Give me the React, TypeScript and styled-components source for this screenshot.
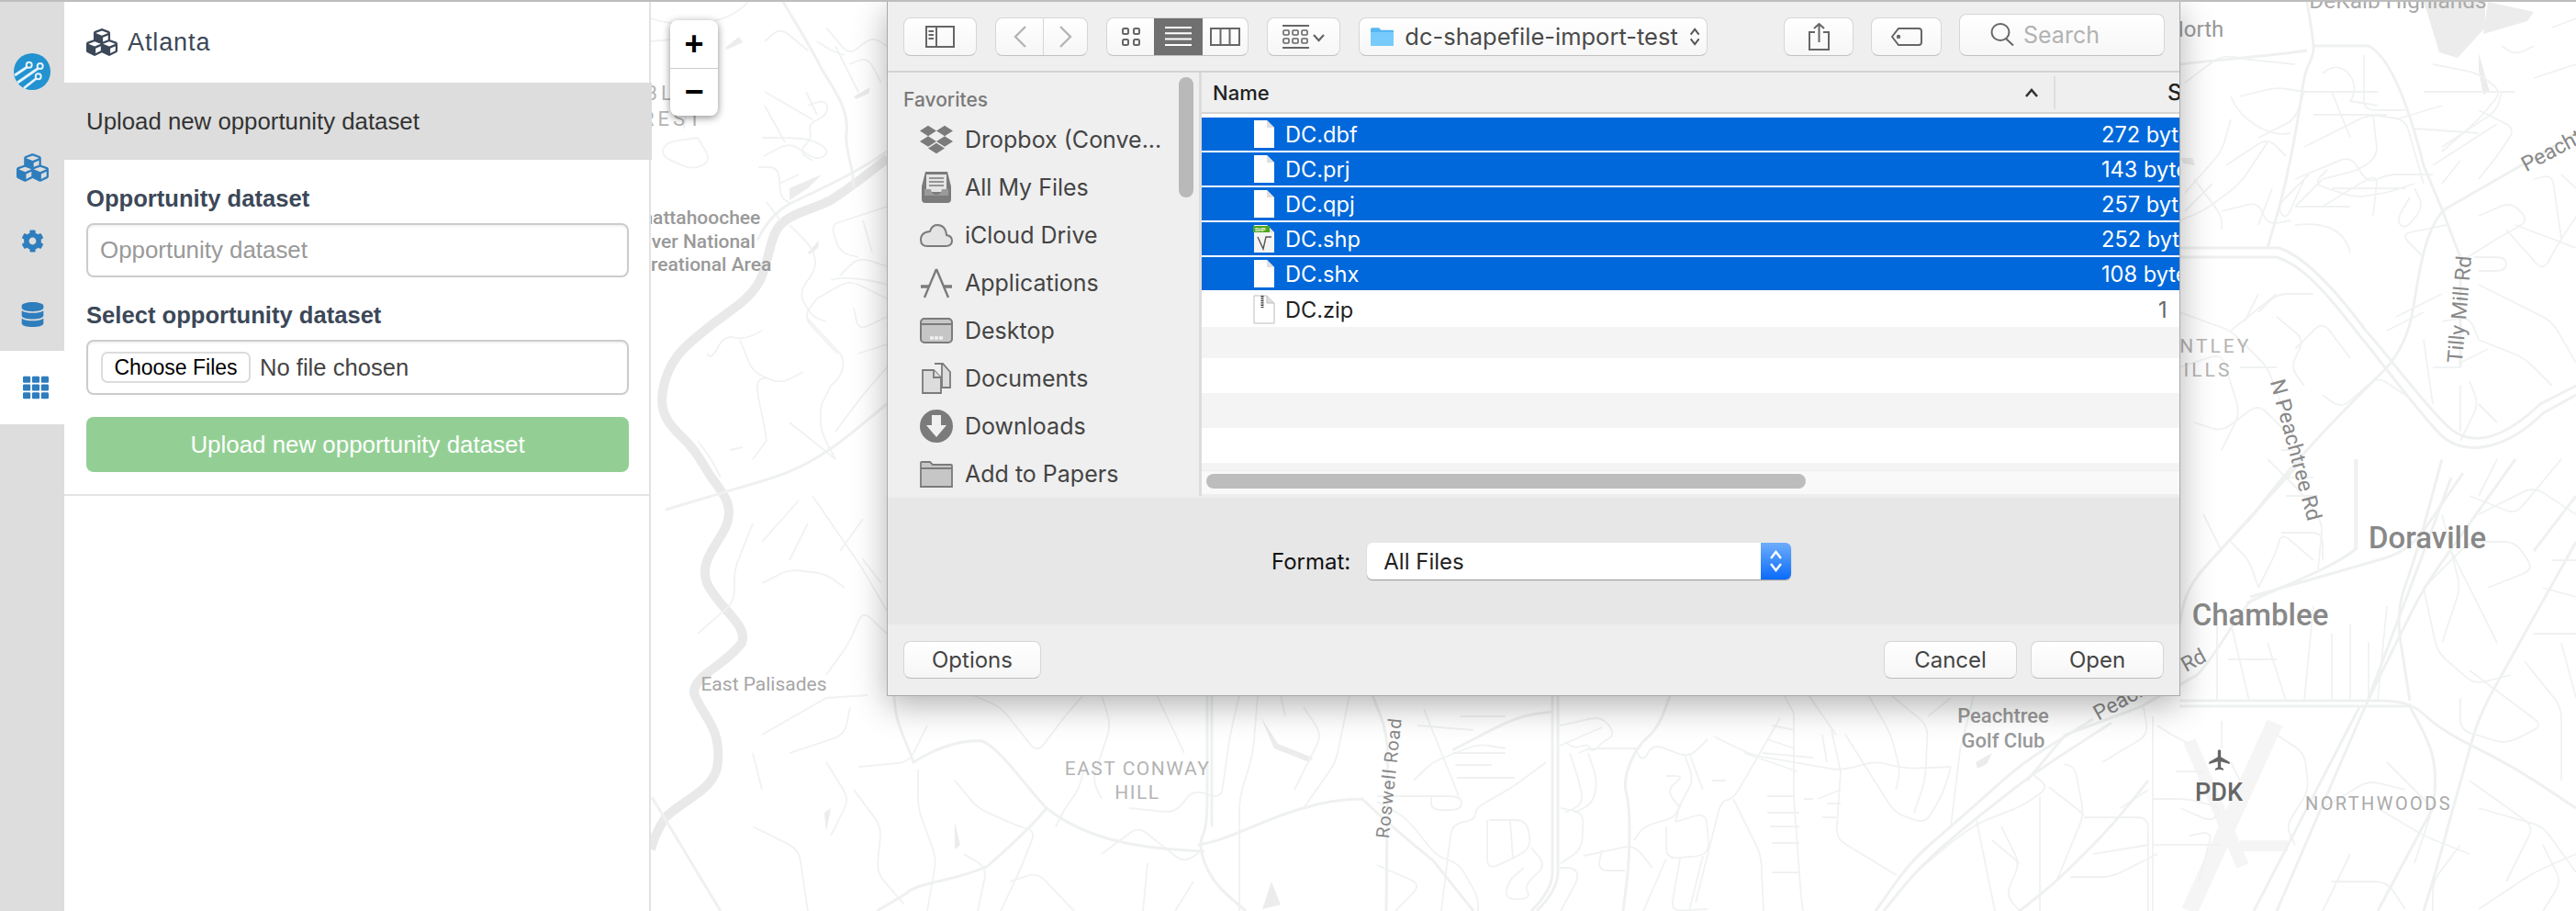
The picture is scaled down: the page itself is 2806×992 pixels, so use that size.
import React from 'react';
import styled, { createGlobalStyle } from 'styled-components';
import { FaCubes, FaCog, FaDatabase, FaTh, FaDropbox } from 'react-icons/fa';
import { MdLocalAirport } from 'react-icons/md';

const GlobalStyle = createGlobalStyle`
    html, body {
        margin: 0;
        padding: 0;
        background: #fff;
    }
    * {
        box-sizing: border-box;
    }
`;

const WEB_FONT = '"Liberation Sans", Arial, sans-serif';
const MAC_FONT = 'Inter, "Liberation Sans", sans-serif';
const MAP_FONT = 'Roboto, "Liberation Sans", sans-serif';

const Page = styled.div`
    position: relative;
    display: flex;
    width: 2806px;
    height: 992px;
    overflow: hidden;
    border-top: 2px solid #bdbdbd;
    font-family: ${WEB_FONT};
`;

/* left icon rail */

const Rail = styled.nav`
    flex: none;
    display: flex;
    flex-direction: column;
    width: 70px;
    background: #ddd;
`;

const RailLogo = styled.div`
    display: flex;
    justify-content: center;
    height: 140px;
    padding-top: 56px;
`;

const RailItem = styled.div<{ $active?: boolean }>`
    display: flex;
    align-items: center;
    justify-content: center;
    height: 80px;
    padding-left: ${({ $active }) => ($active ? '8px' : '0')};
    background: ${({ $active }) => ($active ? '#fff' : 'transparent')};
    color: #2e7dbd;
`;

/* form panel */

const Panel = styled.aside`
    position: relative;
    z-index: 2;
    flex: none;
    width: 639px;
    background: #fff;
    border-right: 2px solid #e2e2e2;
`;

const PanelHeader = styled.header`
    display: flex;
    align-items: center;
    gap: 11px;
    height: 88px;
    padding-left: 24px;
    color: #3c4858;
    font-size: 27px;
    letter-spacing: 0.9px;
`;

const SectionBand = styled.div`
    display: flex;
    align-items: center;
    width: 640px;
    height: 84px;
    padding-left: 24px;
    background: #ddd;
    color: #333;
    font-size: 25.8px;
`;

const Form = styled.form`
    display: flex;
    flex-direction: column;
    padding: 27px 22px 24px 24px;
    border-bottom: 2px solid #e4e4e4;
`;

const FieldLabel = styled.label`
    height: 30px;
    margin-bottom: 12px;
    color: #3c4858;
    font-size: 25.6px;
    font-weight: 700;
    line-height: 30px;
`;

const TextInput = styled.input`
    width: 100%;
    height: 59px;
    margin-bottom: 26px;
    padding: 0 13px;
    border: 2px solid #ccc;
    border-radius: 8px;
    box-shadow: inset 0 2px 2px rgba(0, 0, 0, 0.05);
    color: #333;
    font-family: ${WEB_FONT};
    font-size: 25.9px;

    &::placeholder {
        color: #999;
    }
`;

const FileBox = styled.div`
    display: flex;
    align-items: center;
    gap: 10px;
    height: 60px;
    margin-bottom: 24px;
    padding-left: 14px;
    border: 2px solid #ccc;
    border-radius: 8px;
    box-shadow: inset 0 2px 2px rgba(0, 0, 0, 0.05);
    color: #444;
    font-size: 25.6px;
`;

const FileButton = styled.button`
    width: 163px;
    height: 34px;
    padding: 0;
    border: 2px solid #dcdcdc;
    border-radius: 7px;
    background: #fff;
    color: #000;
    font-family: ${WEB_FONT};
    font-size: 23px;
`;

const SubmitButton = styled.button`
    height: 60px;
    border: none;
    border-radius: 8px;
    background: #93cf94;
    color: #fff;
    font-family: ${WEB_FONT};
    font-size: 25.9px;
`;

/* map */

const MapArea = styled.main`
    position: relative;
    flex: 1;
    overflow: hidden;
    background: #fff;
`;

const MapDrawing = styled.svg`
    display: block;
    width: 100%;
    height: 100%;
`;

const MapLabel = styled.span<{
    $x: number;
    $y: number;
    $size?: number;
    $rot?: number;
    $color?: string;
    $spacing?: number;
    $weight?: number;
}>`
    position: absolute;
    left: ${({ $x }) => $x - 709}px;
    top: ${({ $y }) => $y - 2}px;
    transform: translate(-50%, -50%) rotate(${({ $rot }) => $rot ?? 0}deg);
    color: ${({ $color }) => $color ?? '#a6a6a6'};
    font-family: ${MAP_FONT};
    font-size: ${({ $size }) => $size ?? 21}px;
    font-weight: ${({ $weight }) => $weight ?? 400};
    letter-spacing: ${({ $spacing }) => $spacing ?? 0}px;
    line-height: 1.22;
    text-align: center;
    white-space: pre;
`;

const PlaneMark = styled.div`
    position: absolute;
    left: ${2404 - 709}px;
    top: ${814 - 2}px;
    color: #666;
    line-height: 0;
`;

const ZoomControl = styled.div`
    position: absolute;
    left: 21px;
    top: 20px;
    display: flex;
    flex-direction: column;
    width: 52px;
    height: 104px;
    border-radius: 8px;
    background: #fff;
    box-shadow: 0 2px 8px rgba(0, 0, 0, 0.45);
`;

const ZoomButton = styled.div`
    display: flex;
    flex: 1;
    align-items: center;
    justify-content: center;
    color: #000;
    font-family: ${WEB_FONT};
    font-size: 36px;
    font-weight: 700;
    line-height: 1;

    & + & {
        border-top: 1px solid #ccc;
    }
`;

/* open file dialog */

const Dialog = styled.section`
    position: absolute;
    z-index: 5;
    left: 966px;
    top: 0;
    display: flex;
    flex-direction: column;
    width: 1409px;
    height: 756px;
    overflow: hidden;
    border: 1px solid #a9a9a9;
    border-top: none;
    background: #eee;
    box-shadow: 0 10px 34px rgba(0, 0, 0, 0.3);
    font-family: ${MAC_FONT};
`;

const DialogShadowTop = styled.div`
    height: 6px;
    margin-bottom: -6px;
    background: linear-gradient(rgba(0, 0, 0, 0.05), rgba(0, 0, 0, 0));
`;

const Toolbar = styled.div`
    flex: none;
    display: flex;
    align-items: center;
    gap: 20px;
    height: 77px;
    padding: 0 16px 0 17px;
    border-bottom: 2px solid #d2d2d2;
    background: #efefef;
`;

const ToolGroup = styled.div`
    display: flex;
    gap: 19px;
    margin-left: auto;
`;

const ToolButton = styled.div<{ $w: number; $tall?: boolean }>`
    display: flex;
    flex: none;
    align-items: center;
    justify-content: center;
    width: ${({ $w }) => $w}px;
    height: ${({ $tall }) => ($tall ? 46 : 42)}px;
    margin-top: ${({ $tall }) => ($tall ? -4 : 0)}px;
    border: 1px solid #d6d6d6;
    border-bottom-color: #c0c0c0;
    border-radius: 8px;
    background: linear-gradient(#fff, #f6f6f6);
    color: #666;
`;

const Segmented = styled.div`
    display: flex;
    flex: none;
    height: 42px;
    overflow: hidden;
    border: 1px solid #d6d6d6;
    border-bottom-color: #c0c0c0;
    border-radius: 8px;
    background: linear-gradient(#fff, #f6f6f6);
`;

const Segment = styled.div<{ $w: number; $active?: boolean; $divider?: boolean }>`
    display: flex;
    align-items: center;
    justify-content: center;
    width: ${({ $w }) => $w}px;
    border-left: ${({ $divider }) => ($divider ? '1px solid #d6d6d6' : 'none')};
    background: ${({ $active }) => ($active ? '#707070' : 'transparent')};
    color: ${({ $active }) => ($active ? '#fff' : '#666')};
`;

const PathButton = styled(ToolButton)`
    justify-content: flex-start;
    gap: 12px;
    padding: 0 7px 0 12px;
    color: #4a4a4a;
    font-size: 25.5px;
    white-space: nowrap;
`;

const PathName = styled.span`
    flex: 1;
`;

const SearchButton = styled(ToolButton)`
    justify-content: flex-start;
    gap: 10px;
    padding-left: 33px;
    color: #b2b2b2;
    font-size: 25px;
`;

const Browser = styled.div`
    flex: none;
    display: flex;
    height: 461px;
`;

const Sidebar = styled.div`
    position: relative;
    flex: none;
    width: 342px;
    padding: 15px 0 0 17px;
    border-right: 3px solid #dcdcdc;
    background: #efefef;
`;

const SidebarHeading = styled.div`
    height: 30px;
    margin-bottom: 2px;
    color: #7a7a7a;
    font-size: 21px;
    font-weight: 500;
    line-height: 30px;
`;

const SidebarRow = styled.div`
    display: flex;
    align-items: center;
    gap: 13px;
    height: 52px;
    padding-left: 18px;
    color: #444;
    font-size: 25px;
    white-space: nowrap;
`;

const SidebarIcon = styled.div`
    display: flex;
    flex: none;
    align-items: center;
    justify-content: center;
    width: 36px;
    height: 36px;
    color: #7b7b7b;
`;

const SidebarScroll = styled.div`
    position: absolute;
    right: 6px;
    top: 5px;
    width: 16px;
    height: 131px;
    border-radius: 8px;
    background: #b9b9b9;
`;

const FilePane = styled.div`
    display: flex;
    flex: 1;
    flex-direction: column;
    min-width: 0;
    overflow: hidden;
    background: #fff;
`;

const ColumnHeader = styled.div`
    flex: none;
    display: flex;
    align-items: center;
    height: 45px;
    padding-left: 12px;
    border-bottom: 2px solid #d4d4d4;
    background: #efefef;
    color: #222;
    font-size: 22px;
    font-weight: 500;
`;

const HeaderName = styled.span`
    flex: 1;
`;

const SortCaret = styled.svg`
    flex: none;
    margin-right: 16px;
`;

const HeaderSize = styled.span`
    flex: none;
    width: 137px;
    height: 36px;
    padding-left: 122px;
    border-left: 2px solid #dedede;
    line-height: 36px;
    font-size: 24px;
`;

const RowList = styled.div`
    flex: 1;
    padding-top: 4px;
`;

const FileRow = styled.div<{ $selected?: boolean }>`
    display: flex;
    align-items: center;
    height: 36px;
    margin-bottom: ${({ $selected }) => ($selected ? '2px' : '0')};
    padding-left: 56px;
    overflow: hidden;
    background: ${({ $selected }) => ($selected ? '#0068da' : '#fff')};
    color: ${({ $selected }) => ($selected ? '#fff' : '#222')};
    font-size: 23.6px;
`;

const PlainRow = styled(FileRow)`
    height: 38px;
`;

const FileName = styled.span`
    flex: 1;
    margin-left: 11px;
`;

const FileSize = styled.span<{ $muted?: boolean; $inset?: number }>`
    flex: none;
    width: 85px;
    padding-left: ${({ $inset }) => $inset ?? 0}px;
    color: ${({ $muted }) => ($muted ? '#666' : 'inherit')};
    white-space: nowrap;
`;

const StripeRow = styled.div<{ $h: number; $grey?: boolean }>`
    height: ${({ $h }) => $h}px;
    background: ${({ $grey }) => ($grey ? '#f4f4f4' : '#fff')};
`;

const ScrollTrack = styled.div`
    flex: none;
    height: 28px;
    padding: 3px 0 0 5px;
    border-top: 1px solid #ededed;
    border-bottom: 2px solid #eee;
    background: #f9f9f9;
`;

const ScrollThumb = styled.div`
    width: 653px;
    height: 16px;
    border-radius: 8px;
    background: #bdbdbd;
`;

const OptionsBar = styled.div`
    flex: none;
    display: flex;
    align-items: center;
    height: 138px;
    margin-top: 2px;
    padding-left: 418px;
    background: #e7e7e7;
    color: #111;
    font-size: 24px;
`;

const FormatSelect = styled.div`
    display: flex;
    align-items: center;
    justify-content: space-between;
    width: 462px;
    height: 40px;
    margin-left: 18px;
    padding-left: 18px;
    overflow: hidden;
    border-radius: 6px;
    background: #fff;
    box-shadow: 0 1px 1px rgba(0, 0, 0, 0.35);
    color: #222;
`;

const SelectStepper = styled.div`
    display: flex;
    align-items: center;
    justify-content: center;
    width: 33px;
    height: 100%;
    background: linear-gradient(#6dadfb, #0a6bfb);
`;

const DialogFooter = styled.div`
    flex: 1;
    display: flex;
    align-items: center;
    gap: 15px;
    padding: 0 17px;
    background: #eee;
`;

const FooterButton = styled.div<{ $w: number; $push?: boolean }>`
    display: flex;
    align-items: center;
    justify-content: center;
    width: ${({ $w }) => $w}px;
    height: 41px;
    margin-left: ${({ $push }) => ($push ? 'auto' : '0')};
    border: 1px solid #d6d6d6;
    border-bottom-color: #bdbdbd;
    border-radius: 8px;
    background: linear-gradient(#fff, #f6f6f6);
    color: #444;
    font-size: 24px;
`;

/* drawings */

const Logo = () => (
    <svg width="40" height="40" viewBox="0 0 40 40">
        <circle cx="20" cy="20" r="20" fill="#2292d0" />
        <g fill="none" stroke="#e6f3fb" strokeWidth="2.8">
            <path d="M1 24 L14.5 15" />
            <circle cx="16.7" cy="12.7" r="3" strokeWidth="2" />
            <path d="M4 32 L26.5 16.5" />
            <circle cx="28.7" cy="14" r="3" strokeWidth="2" />
            <path d="M11 38 L24.5 27.5" />
            <circle cx="26.7" cy="25.3" r="3" strokeWidth="2" />
        </g>
    </svg>
);

const PaneIcon = () => (
    <svg width="32" height="24" viewBox="0 0 32 24" fill="none" stroke="currentColor" strokeWidth="2">
        <rect x="1" y="1" width="30" height="22" />
        <path d="M12 1 V23" />
        <path d="M3.5 6 H9 M3.5 10 H9 M3.5 14 H9" />
    </svg>
);

const Chevron = ({ left }: { left?: boolean }) => (
    <svg width="14" height="24" viewBox="0 0 14 24" fill="none" stroke="#b5b5b5" strokeWidth="2.4">
        <path d={left ? 'M13 1 L2 12 L13 23' : 'M1 1 L12 12 L1 23'} />
    </svg>
);

const IconGridView = () => (
    <svg width="20" height="20" viewBox="0 0 20 20" fill="none" stroke="currentColor" strokeWidth="2">
        <rect x="1" y="1" width="6" height="6" rx="1.5" />
        <rect x="13" y="1" width="6" height="6" rx="1.5" />
        <rect x="1" y="13" width="6" height="6" rx="1.5" />
        <rect x="13" y="13" width="6" height="6" rx="1.5" />
    </svg>
);

const IconListView = () => (
    <svg width="29" height="21" viewBox="0 0 29 21" stroke="currentColor" strokeWidth="2">
        <path d="M0 1 H29 M0 7.3 H29 M0 13.6 H29 M0 20 H29" />
    </svg>
);

const IconColumnView = () => (
    <svg width="33" height="20" viewBox="0 0 33 20" fill="none" stroke="currentColor" strokeWidth="2">
        <rect x="1" y="1" width="31" height="18" />
        <path d="M11.5 1 V19 M21.5 1 V19" />
    </svg>
);

const IconArrange = () => (
    <svg width="46" height="26" viewBox="0 0 46 26" fill="none" stroke="currentColor" strokeWidth="1.6">
        <path d="M0 1 H29 M0 25 H29" strokeWidth="2" />
        <rect x="1" y="6" width="6" height="5" rx="1" />
        <rect x="11" y="6" width="6" height="5" rx="1" />
        <rect x="21" y="6" width="6" height="5" rx="1" />
        <rect x="1" y="15" width="6" height="5" rx="1" />
        <rect x="11" y="15" width="6" height="5" rx="1" />
        <rect x="21" y="15" width="6" height="5" rx="1" />
        <path d="M34 11 L39.5 17 L45 11" strokeWidth="2.2" />
    </svg>
);

const BlueFolder = () => (
    <svg width="31" height="24" viewBox="0 0 31 24">
        <path d="M0 2 Q0 0 2 0 H11 L14 3 H29 Q31 3 31 5 V24 H0 Z" fill="#56b7f3" />
        <path d="M0 6 H31 V22 Q31 24 29 24 H2 Q0 24 0 22 Z" fill="#77cbfb" />
    </svg>
);

const UpDown = ({ color = '#555', size = 15 }: { color?: string; size?: number }) => (
    <svg width={size} height={size * 1.6} viewBox="0 0 15 24" fill="none" stroke={color} strokeWidth="2.4">
        <path d="M2 9 L7.5 2 L13 9 M2 15 L7.5 22 L13 15" />
    </svg>
);

const IconShare = () => (
    <svg width="23" height="30" viewBox="0 0 23 30" fill="none" stroke="currentColor" strokeWidth="2">
        <path d="M7 10 H1 V29 H22 V10 H16" />
        <path d="M11.5 21 V1 M6 6 L11.5 1 L17 6" />
    </svg>
);

const IconTag = () => (
    <svg width="34" height="20" viewBox="0 0 34 20" fill="none" stroke="currentColor" strokeWidth="2">
        <path d="M8 1 H30 Q33 1 33 4 V16 Q33 19 30 19 H8 L1 10 Z" />
        <circle cx="8" cy="10" r="1.2" />
    </svg>
);

const IconSearch = () => (
    <svg width="26" height="25" viewBox="0 0 26 25" fill="none" stroke="#666" strokeWidth="2">
        <ellipse cx="11" cy="10" rx="9.5" ry="9" />
        <path d="M17 17 L25 24.5" />
    </svg>
);

const IconTray = () => (
    <svg width="32" height="34" viewBox="0 0 32 34">
        <path d="M4 0 H28 L32 16 V30 Q32 34 28 34 H4 Q0 34 0 30 V16 Z" fill="#7b7b7b" />
        <rect x="5" y="3" width="22" height="19" fill="#e4e4e4" />
        <path d="M8 7 H24 M8 11 H24 M8 15 H24" stroke="#7b7b7b" strokeWidth="1.6" />
        <path d="M3 19 H10 Q11 25 16 25 Q21 25 22 19 H29 V26 H3 Z" fill="#9a9a9a" />
    </svg>
);

const IconCloud = () => (
    <svg width="36" height="25" viewBox="0 0 36 25" fill="#e4e4e4" stroke="#7b7b7b" strokeWidth="2">
        <path d="M8 24 H28 Q35 24 35 18 Q35 13 29 12 Q28 1 19 1 Q13 1 11 8 Q1 9 1 17 Q1 24 8 24 Z" />
    </svg>
);

const IconApps = () => (
    <svg width="36" height="33" viewBox="0 0 36 33" fill="none" stroke="#7b7b7b" strokeWidth="2.4">
        <path d="M18 1 L31 32 M18 1 L5 32" />
        <path d="M1 20 H35" strokeWidth="3.4" strokeDasharray="9 16" />
    </svg>
);

const IconDesktop = () => (
    <svg width="36" height="28" viewBox="0 0 36 28">
        <rect x="1" y="1" width="34" height="26" rx="4" fill="#c6c6c6" stroke="#7b7b7b" strokeWidth="2" />
        <path d="M1 7 H35" stroke="#7b7b7b" strokeWidth="2" />
        <path d="M11 22 H25" stroke="#f0f0f0" strokeWidth="3.6" strokeDasharray="4 1" />
    </svg>
);

const IconDocuments = () => (
    <svg width="32" height="34" viewBox="0 0 32 34" fill="#dcdcdc" stroke="#7b7b7b" strokeWidth="1.8">
        <path d="M14 1 H23 L31 10 V27 H22 V1" />
        <path d="M1 8 H13 L21 16 V33 H1 Z" />
        <path d="M13 8 V16 H21" />
    </svg>
);

const IconDownloads = () => (
    <svg width="36" height="36" viewBox="0 0 36 36">
        <circle cx="18" cy="18" r="18" fill="#7b7b7b" />
        <path d="M13 6 H23 V17 H29 L18 30 L7 17 H13 Z" fill="#f0f0f0" />
    </svg>
);

const IconFolderGrey = () => (
    <svg width="36" height="29" viewBox="0 0 36 29" fill="#c6c6c6" stroke="#7b7b7b" strokeWidth="1.8">
        <path d="M1 28 V2 Q1 1 2 1 H11 L14 4 H34 Q35 4 35 5 V28 Z" />
        <path d="M1 8 H35" />
    </svg>
);

const DocIcon = ({ kind }: { kind?: 'shp' | 'zip' }) => (
    <svg width="24" height="32" viewBox="0 0 24 32">
        <path
            d="M1 1 H15 L23 9 V31 H1 Z"
            fill={kind === 'shp' ? '#f4f4f4' : '#fff'}
            stroke={kind === 'zip' ? '#bdbdbd' : 'none'}
        />
        <path d="M15 1 V9 H23" fill="#dfdfdf" stroke={kind === 'zip' ? '#bdbdbd' : 'none'} />
        {kind === 'shp' && (
            <>
                <rect x="0" y="2" width="18" height="7" fill="#4ea61e" />
                <text x="2" y="8" fontSize="5.5" fontWeight="700" fill="#fff" fontFamily="Liberation Sans">
                    SHP
                </text>
                <path d="M5 14 L11 27 L14 14 L20 14" fill="none" stroke="#555" strokeWidth="1.4" />
            </>
        )}
        {kind === 'zip' && <path d="M10 1 V14" stroke="#333" strokeWidth="3" strokeDasharray="1.4 1" />}
    </svg>
);

/* map geometry, in page coordinates */

// takes the sharp corners off a street polyline, curved paths pass through as they are
const roundCorners = (d: string, r = 12): string =>
    d
        .split(/(?=M)/)
        .map((sub) => {
            if (sub.includes('C')) return sub;
            const tokens = sub.match(/[MLHV]|-?[\d.]+/g) ?? [];
            const pts: number[][] = [];
            let cmd = 'M';
            let x = 0;
            let y = 0;
            for (let i = 0; i < tokens.length; i++) {
                const t = tokens[i];
                if (/[MLHV]/.test(t)) {
                    cmd = t;
                } else if (cmd === 'H') {
                    x = +t;
                    pts.push([x, y]);
                } else if (cmd === 'V') {
                    y = +t;
                    pts.push([x, y]);
                } else {
                    x = +t;
                    y = +tokens[++i];
                    pts.push([x, y]);
                }
            }
            let out = `M${pts[0][0]} ${pts[0][1]}`;
            for (let i = 1; i < pts.length; i++) {
                const p = pts[i];
                if (i === pts.length - 1) {
                    out += ` L${p[0]} ${p[1]}`;
                    break;
                }
                const a = pts[i - 1];
                const b = pts[i + 1];
                const la = Math.hypot(p[0] - a[0], p[1] - a[1]) || 1;
                const lb = Math.hypot(b[0] - p[0], b[1] - p[1]) || 1;
                const ra = Math.min(r, la / 2) / la;
                const rb = Math.min(r, lb / 2) / lb;
                out += ` L${(p[0] - (p[0] - a[0]) * ra).toFixed(1)} ${(p[1] - (p[1] - a[1]) * ra).toFixed(1)}`;
                out += ` Q${p[0]} ${p[1]} ${(p[0] + (b[0] - p[0]) * rb).toFixed(1)} ${(p[1] + (b[1] - p[1]) * rb).toFixed(1)}`;
            }
            return out;
        })
        .join(' ');

const RIVER =
    'M967 172 C945 190 925 205 905 218 C885 228 862 232 850 245 C838 258 838 285 828 305 C815 330 790 340 765 362 C745 378 728 392 722 425 C718 450 728 462 745 478 C760 492 765 505 775 520 C790 540 800 552 790 575 C778 598 762 612 770 635 C785 665 815 680 808 700 C790 725 755 735 756 755 C765 780 785 790 782 830 C780 860 745 870 725 890 C715 905 712 915 709 925';

const WATER = [
    'M2645 17 L2657 57 L2677 63 L2707 30 L2707 2 L2640 2 Z',
    'M2710 2 L2760 13 L2753 23 L2705 37 Z',
    'M2700 58 L2712 100 L2705 103 L2700 77 Z',
    'M790 52 L805 40 L809 46 L792 54 Z',
    'M930 105 L948 95 L946 102 L932 108 Z',
    'M880 275 L892 262 L891 270 L882 277 Z',
    'M860 205 L895 190 L880 205 L860 218 Z',
    'M2376 172 L2388 172 L2391 180 L2378 178 Z',
    'M1373 780 L1392 810 L1430 825 L1426 830 L1388 815 Z',
    'M2152 830 L2170 820 L2164 832 L2154 837 Z',
    'M1040 895 L1046 920 L1040 925 Z',
    'M905 880 L900 905 L898 885 Z',
    'M1385 960 L1395 985 L1375 990 Z',
];

const RUNWAYS = [
    { d: 'M2385 807 L2443 943', w: 14 },
    { d: 'M2478 787 L2385 992', w: 18 },
    { d: 'M2440 921 L2492 921', w: 12 },
];

const MAJOR = [
    'M853 2 C870 30 885 55 895 75 C910 100 925 120 922 145 C920 165 930 180 930 205',
    'M966 165 C930 190 895 205 860 222 C842 232 830 250 825 262',
    'M725 555 L860 515 L905 490 L966 440',
    'M710 868 C730 900 765 960 785 992',
    'M974 757 C975 790 985 800 995 830 C1010 820 1040 805 1070 807 C1090 815 1120 860 1140 880 C1190 920 1260 925 1312 927',
    'M1140 880 C1120 905 1090 930 1076 943 C1040 960 1000 960 987 973 L955 992',
    'M1315 757 V900 L1305 920 L1320 960 L1357 992',
    'M1320 757 V900',
    'M1305 920 C1340 915 1380 890 1420 880 C1445 872 1470 870 1484 870 C1515 900 1540 920 1561 937 L1605 992',
    'M1495 757 L1512 800 L1510 992',
    'M1691 757 V950 C1691 965 1680 980 1668 992',
    'M1697 757 V950 C1697 965 1686 980 1674 992',
    'M1819 758 L1806 793 L1783 813 L1768 850 L1775 877 V937 L1768 992',
    'M1582 817 L1653 780 L1691 775',
    'M2280 783 L2204 830 L2125 900 L2082 937 L2043 992',
    'M2300 787 L2214 843 L2135 905 L2090 945 L2052 992',
    'M2374 270 H2483 C2510 280 2540 310 2577 360 C2600 385 2640 440 2667 465 C2695 490 2730 475 2767 440 L2806 420',
    'M2374 280 H2480 C2510 290 2535 320 2570 365 C2595 395 2635 450 2660 475 C2690 500 2735 485 2770 450 L2806 430',
    'M2513 2 L2520 45 V60 L2510 80 L2505 120 L2490 200 L2470 270',
    'M2520 50 H2580 C2600 60 2620 100 2640 180 L2660 228 L2680 280 V400',
    'M2806 145 L2750 178 L2663 228 C2640 250 2635 300 2627 345 C2620 375 2607 395 2590 410 C2550 450 2500 500 2455 560 L2393 627',
    'M2374 70 C2420 65 2480 60 2513 55',
    'M2447 657 C2480 640 2540 620 2567 597 V500',
    'M2451 650 L2625 600 L2683 515',
    'M2509 500 L2393 627 L2380 650 L2374 680',
    'M2451 655 C2430 680 2410 720 2393 735 L2331 770 L2250 800 L2208 850',
    'M2374 763 H2625 L2656 793 L2741 837 L2806 880',
    'M2374 769 H2625',
    'M2625 763 L2610 667 L2633 600 L2660 500',
    'M2579 763 L2633 620 L2670 520',
    'M2740 500 L2640 640 L2579 763 L2480 992',
    'M2570 770 L2455 992',
    'M2625 769 C2640 800 2660 820 2650 880 L2590 992',
    'M2806 590 L2750 690 L2700 780 L2650 960 L2640 992',
    'M2806 540 L2760 600',
    'M2200 992 L2240 960 L2300 900 L2340 850',
];

const MINOR = [
    'M709 20 C740 30 790 30 815 2', 'M709 45 L745 42', 'M900 30 L925 60 L950 40 L966 50', 'M925 70 L945 62 L960 90',
    'M890 45 L905 55 L920 60', 'M910 50 L935 100',
    'M760 150 L775 175 L755 185 L720 170 L725 155 L760 150', 'M745 140 L750 100',
    'M833 100 L885 130 M878 100 L890 125', 'M880 115 L900 108 L902 125 L880 135 L885 150 L870 165 L885 175',
    'M830 150 H860 L885 152 L905 165 L890 175 L860 155 L832 170',
    'M826 182 H848 L850 215 L862 222', 'M849 200 L870 190', 'M835 220 L850 240',
    'M860 245 L885 270 L890 290 L870 320 L885 345 L900 350',
    'M905 305 C920 300 950 305 966 310', 'M940 240 L950 275 M966 290 L935 280 L915 300',
    'M966 225 L920 240 L905 245 L915 275 L935 280',
    'M878 345 L915 385 C922 395 918 410 905 420 L895 440 C890 470 900 480 910 500',
    'M890 325 L925 305 L966 325 M890 325 L875 345 L912 385',
    'M930 335 L935 360 L966 345', 'M935 385 L966 375', 'M910 470 L940 430 L966 400',
    'M830 360 L810 370 L790 365 L775 390 L770 385 M806 370 L820 405 L850 418 L875 405',
    'M835 412 C815 410 830 440 835 480 L820 500',
    'M795 490 L809 487', 'M760 480 L775 500 L785 520', 'M860 460 L910 500',
    'M745 100 L775 90', 'M833 115 L855 155', 'M833 45 L850 30 L880 55',
    'M820 570 L800 620 L800 655 L760 690 M830 590 L870 545', 'M885 540 L940 620 L966 665',
    'M880 570 L860 610 M830 635 L860 620 L900 625 L920 640', 'M939 608 L960 635 M915 600 L940 565',
    'M966 690 L940 665 L925 700 L900 735', 'M830 800 L900 760', 'M900 760 L945 757',
    'M935 835 L990 830 L1010 790 M1000 838 L1000 880 L1020 935 L1010 992',
    'M930 860 L960 900 L955 950 L985 985', 'M820 900 L870 925 L880 992',
    'M860 820 L920 800 L926 770', 'M900 830 L925 870 L905 910', 'M820 820 L830 860',
    'M1040 850 L1065 880 L1110 900 L1128 905 L1110 950 L1090 992',
    'M1060 757 L1090 770 L1130 820 L1160 780 L1180 757', 'M1200 757 L1210 790 L1190 850 L1200 870',
    'M1180 840 L1175 860 L1160 880 L1150 900 M1260 757 L1290 820',
    'M1230 880 L1280 885 L1300 860 L1330 870 L1340 800 L1350 757',
    'M1200 930 L1240 900 L1290 940 L1310 925', 'M1250 940 L1245 992 M1300 960 L1280 992',
    'M1100 960 L1130 950 L1170 992', 'M1050 930 L1075 945 L1065 992',
    'M1370 757 L1365 820 L1350 870 L1350 992', 'M1395 757 L1400 780 M1420 770 L1440 800 L1410 860',
    'M1420 880 L1455 830 L1470 757', 'M1540 850 L1560 830 L1610 810 L1640 815 M1544 790 L1605 795',
    'M1551 772 L1589 867', 'M1500 867 H1592 V882 H1559 V867', 'M1590 780 H1640 M1582 820 H1640 M1585 833 H1625 M1587 847 H1650',
    'M1684 830 L1648 857 L1607 880 V893 L1582 897 L1577 933 L1570 992',
    'M1500 873 L1531 890 L1566 933 L1589 940 L1610 977 V992', 'M1500 942 L1548 963 L1520 992',
    'M1622 893 H1663 L1668 923 L1648 935 L1620 947 V893', 'M1645 893 L1648 935', 'M1668 923 L1684 942 L1660 965 L1668 978 L1640 980 L1642 960 L1660 945',
    'M1699 790 L1745 780 L1760 800 L1745 808 L1735 820 L1730 810 L1715 815 L1705 808',
    'M1699 812 L1745 792', 'M1710 820 L1720 850 L1725 875 L1705 885',
    'M1720 820 L1730 815 L1782 815', 'M1730 820 L1740 850 L1735 875 L1715 885',
    'M1699 945 H1715 L1720 955 L1700 992', 'M1700 880 L1725 885 L1723 925 L1700 940', 'M1725 932 L1780 920 L1800 945',
    'M1745 925 L1740 948 H1770',
    'M1780 815 L1790 830 L1800 810 L1840 825 L1860 805', 'M1835 822 L1845 850 L1830 875 L1825 895',
    'M1830 875 L1825 890 L1790 900 L1780 915',
    'M1865 850 H1880 M1840 820 L1855 860 M1815 845 H1835 L1815 860 L1830 880',
    'M1825 895 L1858 885 L1862 923 L1855 932 L1815 935 L1815 900',
    'M1815 935 L1790 992 M1830 935 L1820 992 L1860 990 M1855 932 L1840 992',
    'M1939 782 L1888 870 L1875 872 L1862 923 L1847 983', 'M1888 870 L1918 930 L1921 992', 'M1954 777 V870 L1962 977 L1964 992',
    'M1867 802 L1908 822 L2005 839 L2043 829 L2076 837 L2125 835', 'M1944 758 L1954 777',
    'M1900 820 L1958 840', 'M1930 790 L1955 795 M1925 805 L1955 815 M1920 820 L1975 825',
    'M1925 867 H1955 M1925 885 H1960 M1928 900 H1960 M1930 918 H1960 M1930 950 H1960',
    'M1980 870 L2005 860 M1965 870 H1975 M1990 875 H2005 M1985 890 H2000',
    'M2010 800 L2064 885 L2097 897 L2117 863 L2125 835', 'M2005 839 L2000 913 L2066 953',
    'M1985 800 L1990 830 M1995 795 L2005 840', 'M2035 757 L2060 800 L2070 840 L2065 860',
    'M2060 757 L2100 790 L2097 850 L2085 885', 'M1970 757 L2000 800', 'M2100 780 L2125 760',
    'M2135 817 L2125 900', 'M2150 757 L2135 817', 'M2214 843 L2232 857 L2204 877 L2153 897 L2122 920 L2087 950',
    'M2153 893 L2173 992', 'M2232 857 L2270 887', 'M2222 867 V992', 'M2248 832 L2260 835 L2270 887 L2240 960',
    'M2180 900 L2200 940 L2185 975 L2200 992', 'M2200 940 L2170 915', 'M2255 955 L2300 955 L2350 930',
    'M2270 890 H2340 V992 M2310 880 L2340 860 M2280 930 L2340 920 M2290 830 L2340 800 L2335 770',
    'M2345 780 V992 M2350 790 L2365 800 L2385 810', 'M2370 840 H2400', 'M2345 870 H2385 L2420 880 L2410 895 L2375 880',
    'M2385 910 L2410 905 L2395 960', 'M2345 920 H2420', 'M2430 830 L2440 850 M2420 785 V815',
    'M2380 90 L2420 60 L2450 65 L2500 70', 'M2440 105 L2480 95 L2510 100 M2460 150 L2500 130 L2510 100',
    'M2430 105 C2440 130 2470 150 2495 145', 'M2425 180 L2470 150 L2490 170', 'M2380 210 L2420 165 L2430 130',
    'M2510 100 H2590 M2530 80 C2550 60 2575 90 2560 110 L2590 115', 'M2540 100 L2560 150 M2575 60 V120 H2620',
    'M2520 125 H2600 M2510 160 L2580 125 L2620 130 L2640 200 M2585 125 L2590 170 L2570 185 L2530 195',
    'M2535 185 L2520 200 L2565 215 L2600 210 L2630 200', 'M2500 195 L2560 170 L2580 200 L2600 190 H2650',
    'M2500 225 L2530 195 M2530 225 L2570 200 L2590 190 L2585 235 M2540 205 H2620',
    'M2610 130 L2660 115 M2630 140 L2700 145 M2640 100 H2740 M2650 70 L2700 80 L2725 100 L2700 130 L2660 165',
    'M2660 160 L2720 120 L2725 100 M2650 180 L2720 135 M2660 200 L2680 175 M2700 120 L2740 140 L2720 170 L2700 195',
    'M2725 50 L2740 60 L2760 50', 'M2780 30 L2806 20 M2760 85 L2806 70', 'M2810 230 L2790 260 L2770 295 L2730 250',
    'M2700 235 L2735 220 L2755 240 L2720 260', 'M2720 260 L2680 285', 'M2760 195 L2780 190 L2790 260',
    'M2790 190 L2806 205 M2740 245 L2806 270', 'M2695 280 H2730 V295 H2700', 'M2700 310 L2780 350 L2806 395',
    'M2640 280 L2615 255 L2640 250 L2665 245 M2610 345 L2640 330 L2660 320',
    'M2500 245 C2540 240 2555 255 2560 275', 'M2420 230 L2460 220 L2470 245 L2495 240',
    'M2380 230 L2410 200', 'M2390 195 L2420 235 L2420 250', 'M2374 240 L2400 230 L2440 200 L2470 155',
    'M2475 205 L2460 245 M2515 190 L2480 225 L2490 240 L2510 195', 'M2500 225 H2560',
    'M2625 215 L2610 240 L2620 250 L2640 225 L2630 205', 'M2700 370 L2750 390 L2780 420', 'M2660 350 L2690 345 L2700 370',
    'M2500 380 L2530 350 L2560 390', 'M2460 340 L2480 320 L2520 320', 'M2480 345 L2510 370 L2495 400 L2510 420',
    'M2530 430 L2550 445 L2590 410 L2620 430', 'M2640 370 L2650 440', 'M2690 415 L2700 440 L2680 480', 'M2680 395 L2710 380',
    'M2600 360 L2640 340', 'M2650 400 H2680', 'M2680 420 V470 M2700 440 L2720 460',
    'M2374 340 L2430 360 L2470 400 L2485 440 L2500 480', 'M2430 360 L2480 320 M2440 400 L2480 400 M2445 350 L2460 320',
    'M2374 400 L2420 385 L2440 450 L2420 490', 'M2390 460 L2420 470 L2460 440 L2490 470',
    'M2470 500 L2510 540 L2530 570 L2525 620', 'M2565 500 V597', 'M2490 520 L2520 520', 'M2490 540 H2525 M2485 490 H2500',
    'M2485 580 H2530 V610 M2460 640 L2480 600 L2485 580 L2520 610', 'M2430 590 L2450 610 L2460 640 M2400 560 L2420 600',
    'M2415 680 V763 M2428 670 L2450 763 M2460 718 H2480 M2427 718 H2460',
    'M2470 700 L2490 763 M2520 660 L2510 763 M2540 690 V763 M2560 680 V763',
    'M2580 700 V763 M2600 660 L2590 763 M2640 640 L2690 590 L2740 590 L2760 620 L2710 640',
    'M2640 640 L2655 710 L2695 745 L2735 735 M2670 600 L2690 640 L2720 700', 'M2660 560 L2680 640 L2660 700',
    'M2690 540 L2740 560 L2790 500 M2720 500 L2700 540', 'M2700 560 L2760 530 L2806 560',
    'M2750 720 L2790 770 L2790 850', 'M2690 730 L2770 790 L2730 810 L2680 795 L2680 760',
    'M2760 690 L2806 690 M2780 610 H2806 M2770 640 L2806 650 M2790 700 L2806 760',
    'M2530 880 L2580 850 L2620 860 M2600 830 L2650 880 L2630 940', 'M2590 880 L2640 910 L2690 930',
    'M2680 920 L2650 960 L2650 992', 'M2690 850 L2760 900 L2730 960', 'M2700 880 L2770 900 L2806 950',
    'M2540 960 H2600 L2620 990', 'M2560 930 L2530 992', 'M2700 990 L2760 950 L2806 930',
    'M2770 920 L2790 960 L2770 992', 'M2480 800 L2510 820 L2515 860 L2490 900 L2500 920',
];

const MapRoads = () => (
    <MapDrawing viewBox="709 2 2097 990" preserveAspectRatio="none">
        <path d={RIVER} fill="none" stroke="#e9e9e9" strokeWidth="10" />
        {WATER.map((d) => (
            <path key={d} d={d} fill="#ececec" />
        ))}
        {RUNWAYS.map((r) => (
            <path key={r.d} d={r.d} stroke="#f5f5f5" strokeWidth={r.w} />
        ))}
        <g fill="none" stroke="#f0f2f2" strokeWidth="1.8">
            {MINOR.map((d) => (
                <path key={d} d={roundCorners(d)} />
            ))}
        </g>
        <g fill="none" stroke="#eff1f1" strokeWidth="3">
            {MAJOR.map((d) => (
                <path key={d} d={roundCorners(d, 30)} />
            ))}
        </g>
    </MapDrawing>
);

const sidebarItems: { label: string; icon: React.ReactNode }[] = [
    { label: 'Dropbox (Conve...', icon: <FaDropbox size={36} /> },
    { label: 'All My Files', icon: <IconTray /> },
    { label: 'iCloud Drive', icon: <IconCloud /> },
    { label: 'Applications', icon: <IconApps /> },
    { label: 'Desktop', icon: <IconDesktop /> },
    { label: 'Documents', icon: <IconDocuments /> },
    { label: 'Downloads', icon: <IconDownloads /> },
    { label: 'Add to Papers', icon: <IconFolderGrey /> },
];

const selectedFiles: { name: string; size: string; kind?: 'shp' }[] = [
    { name: 'DC.dbf', size: '272 bytes' },
    { name: 'DC.prj', size: '143 bytes' },
    { name: 'DC.qpj', size: '257 bytes' },
    { name: 'DC.shp', size: '252 bytes', kind: 'shp' },
    { name: 'DC.shx', size: '108 bytes' },
];

const App: React.FC = () => {
    return (
        <Page>
            <GlobalStyle />
            <Rail>
                <RailLogo>
                    <Logo />
                </RailLogo>
                <RailItem>
                    <FaCubes size={35} />
                </RailItem>
                <RailItem>
                    <FaCog size={25} />
                </RailItem>
                <RailItem>
                    <FaDatabase size={27} />
                </RailItem>
                <RailItem $active>
                    <FaTh size={28} />
                </RailItem>
            </Rail>

            <Panel>
                <PanelHeader>
                    <FaCubes size={34} />
                    Atlanta
                </PanelHeader>
                <SectionBand>Upload new opportunity dataset</SectionBand>
                <Form>
                    <FieldLabel>Opportunity dataset</FieldLabel>
                    <TextInput placeholder="Opportunity dataset" />
                    <FieldLabel>Select opportunity dataset</FieldLabel>
                    <FileBox>
                        <FileButton type="button">Choose Files</FileButton>
                        No file chosen
                    </FileBox>
                    <SubmitButton type="button">Upload new opportunity dataset</SubmitButton>
                </Form>
            </Panel>

            <MapArea>
                <MapRoads />
                <MapLabel $x={719} $y={102} $size={22} $color="#b4b4b4" $spacing={4}>BL</MapLabel>
                <MapLabel $x={733} $y={130} $size={22} $color="#b4b4b4" $spacing={4}>REST</MapLabel>
                <MapLabel $x={757} $y={263} $weight={500} $color="#999">
                    {'Chattahoochee\nRiver National\nRecreational Area'}
                </MapLabel>
                <MapLabel $x={832} $y={746}>East Palisades</MapLabel>
                <MapLabel $x={1239} $y={851} $color="#b4b4b4" $spacing={1.5}>{'EAST CONWAY\nHILL'}</MapLabel>
                <MapLabel $x={1513} $y={847} $rot={-84} $color="#888" $size={20} $spacing={1}>Roswell Road</MapLabel>
                <MapLabel $x={2392} $y={33} $size={24} $color="#999">North</MapLabel>
                <MapLabel $x={2612} $y={1} $size={24.5} $color="#aaa">DeKalb Highlands</MapLabel>
                <MapLabel $x={2794} $y={157} $rot={-28} $size={23} $color="#888">Peachtree</MapLabel>
                <MapLabel $x={2680} $y={337} $rot={-85} $size={23} $color="#888">Tilly Mill Rd</MapLabel>
                <MapLabel $x={2500} $y={490} $rot={75} $size={23} $color="#888">N Peachtree Rd</MapLabel>
                <MapLabel $x={2396} $y={391} $color="#b4b4b4" $spacing={3}>{'HUNTLEY\nHILLS'}</MapLabel>
                <MapLabel $x={2462} $y={670} $size={33} $weight={500} $color="#888">Chamblee</MapLabel>
                <MapLabel $x={2644} $y={586} $size={33} $weight={500} $color="#888">Doraville</MapLabel>
                <MapLabel $x={2342} $y={746} $rot={-29} $size={23} $color="#888">Peachtree Rd</MapLabel>
                <MapLabel $x={2182} $y={794} $size={22} $weight={500} $color="#999">{'Peachtree\nGolf Club'}</MapLabel>
                <PlaneMark>
                    <MdLocalAirport size={27} />
                </PlaneMark>
                <MapLabel $x={2417} $y={863} $size={27} $weight={500} $color="#666">PDK</MapLabel>
                <MapLabel $x={2591} $y={875} $size={20} $color="#aaa" $spacing={2.4}>NORTHWOODS</MapLabel>
                <ZoomControl>
                    <ZoomButton>+</ZoomButton>
                    <ZoomButton>−</ZoomButton>
                </ZoomControl>
            </MapArea>

            <Dialog>
                <DialogShadowTop />
                <Toolbar>
                    <ToolButton $w={80}>
                        <PaneIcon />
                    </ToolButton>
                    <Segmented>
                        <Segment $w={51}>
                            <Chevron left />
                        </Segment>
                        <Segment $w={48} $divider>
                            <Chevron />
                        </Segment>
                    </Segmented>
                    <Segmented>
                        <Segment $w={51}>
                            <IconGridView />
                        </Segment>
                        <Segment $w={53} $active>
                            <IconListView />
                        </Segment>
                        <Segment $w={49}>
                            <IconColumnView />
                        </Segment>
                    </Segmented>
                    <ToolButton $w={80}>
                        <IconArrange />
                    </ToolButton>
                    <PathButton $w={380}>
                        <BlueFolder />
                        <PathName>dc-shapefile-import-test</PathName>
                        <UpDown />
                    </PathButton>
                    <ToolGroup>
                        <ToolButton $w={76}>
                            <IconShare />
                        </ToolButton>
                        <ToolButton $w={77}>
                            <IconTag />
                        </ToolButton>
                        <SearchButton $w={224} $tall>
                            <IconSearch />
                            Search
                        </SearchButton>
                    </ToolGroup>
                </Toolbar>

                <Browser>
                    <Sidebar>
                        <SidebarScroll />
                        <SidebarHeading>Favorites</SidebarHeading>
                        {sidebarItems.map((item) => (
                            <SidebarRow key={item.label}>
                                <SidebarIcon>{item.icon}</SidebarIcon>
                                {item.label}
                            </SidebarRow>
                        ))}
                    </Sidebar>
                    <FilePane>
                        <ColumnHeader>
                            <HeaderName>Name</HeaderName>
                            <SortCaret width="16" height="10" viewBox="0 0 16 10" fill="none" stroke="#333" strokeWidth="2.6">
                                <path d="M2 9 L8 2 L14 9" />
                            </SortCaret>
                            <HeaderSize>S</HeaderSize>
                        </ColumnHeader>
                        <RowList>
                            {selectedFiles.map((file) => (
                                <FileRow key={file.name} $selected>
                                    <DocIcon kind={file.kind} />
                                    <FileName>{file.name}</FileName>
                                    <FileSize>{file.size}</FileSize>
                                </FileRow>
                            ))}
                            <PlainRow>
                                <DocIcon kind="zip" />
                                <FileName>DC.zip</FileName>
                                <FileSize $muted $inset={62}>1</FileSize>
                            </PlainRow>
                            <StripeRow $h={34} $grey />
                            <StripeRow $h={38} />
                            <StripeRow $h={38} $grey />
                            <StripeRow $h={38} />
                            <StripeRow $h={8} $grey />
                        </RowList>
                        <ScrollTrack>
                            <ScrollThumb />
                        </ScrollTrack>
                    </FilePane>
                </Browser>

                <OptionsBar>
                    Format:
                    <FormatSelect>
                        All Files
                        <SelectStepper>
                            <UpDown color="#fff" size={15} />
                        </SelectStepper>
                    </FormatSelect>
                </OptionsBar>

                <DialogFooter>
                    <FooterButton $w={150}>Options</FooterButton>
                    <FooterButton $w={145} $push>Cancel</FooterButton>
                    <FooterButton $w={145}>Open</FooterButton>
                </DialogFooter>
            </Dialog>
        </Page>
    );
};

export default App;
